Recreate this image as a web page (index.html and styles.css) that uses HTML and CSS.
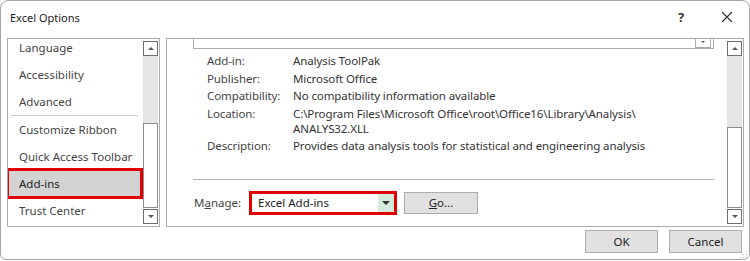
FILE: index.html
```html
<!DOCTYPE html>
<html lang="en">
<head>
  <meta charset="UTF-8">
  <title>Excel Options</title>
  <link rel="stylesheet" href="styles.css">
</head>
<body>

  <div class="window">
    <div class="titlebar">
      <span class="title">Excel Options</span>
      <span class="help">?</span>
      <span class="close">
        <svg width="12" height="12" viewBox="0 0 12 12"><path d="M1 1 L11 11 M11 1 L1 11" stroke="#333" stroke-width="1.1" fill="none"/></svg>
      </span>
    </div>

    <div class="main">
      <div class="panel nav">
        <ul class="nav-list">
          <li>Language</li>
          <li>Accessibility</li>
          <li>Advanced</li>
          <li class="nav-sep"></li>
          <li>Customize Ribbon</li>
          <li>Quick Access Toolbar</li>
          <li class="selected">Add-ins</li>
          <li>Trust Center</li>
        </ul>
        <div class="scrollbar">
          <div class="sb-btn"><span class="arrow up"></span></div>
          <div class="sb-track nav-track"></div>
          <div class="sb-thumb nav-thumb"></div>
          <div class="sb-btn"><span class="arrow down"></span></div>
        </div>
      </div>

      <div class="panel content">
        <div class="content-inner">
          <div class="addin-list">
            <div class="mini-btn"><span class="arrow down small"></span></div>
          </div>

          <div class="details">
            <span class="label">Add-in:</span>
            <span class="value">Analysis ToolPak</span>
            <span class="label">Publisher:</span>
            <span class="value">Microsoft Office</span>
            <span class="label">Compatibility:</span>
            <span class="value">No compatibility information available</span>
            <span class="label">Location:</span>
            <span class="value">C:\Program Files\Microsoft Office\root\Office16\Library\Analysis\<br>ANALYS32.XLL</span>
            <span class="label">Description:</span>
            <span class="value">Provides data analysis tools for statistical and engineering analysis</span>
          </div>

          <div class="divider"></div>

          <div class="manage">
            <span class="manage-label">M<u>a</u>nage:</span>
            <div class="combo">
              <span class="combo-text">Excel Add-ins</span>
              <span class="combo-btn"><span class="arrow down dark"></span></span>
            </div>
            <button class="btn go-btn"><u>G</u>o...</button>
          </div>
        </div>
        <div class="scrollbar">
          <div class="sb-btn"><span class="arrow up"></span></div>
          <div class="sb-track content-track"></div>
          <div class="sb-thumb content-thumb"></div>
          <div class="sb-btn"><span class="arrow down"></span></div>
        </div>
      </div>
    </div>

    <div class="footer">
      <button class="btn">OK</button>
      <button class="btn">Cancel</button>
      <svg class="grip" width="8" height="8" viewBox="0 0 8 8">
        <rect x="6" y="0" width="1" height="1" fill="#bbb"/>
        <rect x="3" y="3" width="1" height="1" fill="#bbb"/>
        <rect x="6" y="3" width="1" height="1" fill="#bbb"/>
        <rect x="0" y="6" width="1" height="1" fill="#bbb"/>
        <rect x="3" y="6" width="1" height="1" fill="#bbb"/>
        <rect x="6" y="6" width="1" height="1" fill="#bbb"/>
      </svg>
    </div>
  </div>

</body>
</html>
```

FILE: styles.css
```css
body {
  margin: 0;
  background: #fff;
  font-family: "Noto Sans", "Open Sans", sans-serif;
  font-size: 11.5px;
  color: #333;
}

.window {
  width: 750px;
  height: 260px;
  box-sizing: border-box;
  border: 1px solid #a6a6a6;
  border-radius: 8px 8px 6px 6px;
  background: #fff;
  display: flex;
  flex-direction: column;
  overflow: hidden;
}

.titlebar {
  height: 37px;
  display: flex;
  align-items: center;
  padding: 0 0 5px 9px;
  box-sizing: border-box;
}

.title {
  flex: 1;
  font-size: 11px;
  color: #1a1a1a;
}

.help {
  font-size: 13px;
  font-weight: bold;
  color: #333;
  width: 10px;
  text-align: center;
  margin-right: -1px;
}

.close {
  display: flex;
  margin-left: 36px;
  margin-right: 16px;
}

.main {
  display: flex;
  gap: 6px;
  padding: 0 5px 0 6px;
  height: 189px;
}

.panel {
  border: 1px solid #ababab;
  display: flex;
  overflow: hidden;
  position: relative;
}

.nav {
  width: 153px;
  box-sizing: border-box;
}

.nav-list {
  list-style: none;
  margin: -5px 2px 0 0;
  padding: 0;
  flex: 1;
}

.nav-list li {
  height: 27px;
  line-height: 27px;
  padding-left: 11px;
  color: #444;
  white-space: nowrap;
}

.nav-list .nav-sep {
  height: 1px;
  margin: 0 3px 0 3px;
  background: #d0d0d0;
}

.nav-list .selected {
  background: #d3d3d3;
  outline: 3px solid #e00000;
  outline-offset: -1px;
  color: #222;
}

.scrollbar {
  width: 15px;
  padding: 2px 1px 2px 0;
  display: flex;
  flex-direction: column;
}

.sb-btn {
  height: 15px;
  box-sizing: border-box;
  border: 1px solid #6e6e6e;
  background: #fff;
  display: flex;
  align-items: center;
  justify-content: center;
}

.sb-track {
  background: #e6e6e6;
}

.sb-thumb {
  box-sizing: border-box;
  border: 1px solid #8c8c8c;
  background: #fff;
  margin-bottom: 1px;
}

.nav-track { height: 67px; }
.nav-thumb { height: 86px; }

.content-track { height: 71px; }
.content-thumb { height: 82px; }

.arrow {
  width: 0;
  height: 0;
  border-left: 3px solid transparent;
  border-right: 3px solid transparent;
}

.arrow.up { border-bottom: 3px solid #555; }
.arrow.down { border-top: 3px solid #555; }
.arrow.small { border-left-width: 2px; border-right-width: 2px; border-top-width: 2px; }
.arrow.dark { border-left-width: 4px; border-right-width: 4px; border-top: 4px solid #333; }

.content {
  flex: 1;
}

.content-inner {
  flex: 1;
  padding-left: 26px;
  padding-right: 13px;
}

.addin-list {
  height: 10px;
  box-sizing: border-box;
  border: 1px solid #ababab;
  border-top: none;
  display: flex;
  justify-content: flex-end;
}

.mini-btn {
  width: 16px;
  height: 9px;
  box-sizing: border-box;
  border: 1px solid #ababab;
  border-top: none;
  margin-right: 2px;
  display: flex;
  justify-content: center;
  padding-top: 2px;
}

.details {
  display: grid;
  grid-template-columns: 86px 1fr;
  row-gap: 2.5px;
  line-height: 15px;
  letter-spacing: -0.1px;
  margin: 4px 0 0 14px;
}

.label {
  color: #444;
}

.divider {
  height: 1px;
  background: #b4b4b4;
  margin-top: 25.5px;
}

.manage {
  display: flex;
  align-items: center;
  margin-top: 11px;
}

.manage-label {
  color: #444;
  width: 55px;
  margin-left: 1px;
}

.combo {
  width: 148px;
  height: 24px;
  box-sizing: border-box;
  border: 3px solid #e00000;
  display: flex;
  align-items: center;
}

.combo-text {
  flex: 1;
  padding-left: 6px;
  color: #222;
}

.combo-btn {
  width: 16px;
  height: 18px;
  background: #d4ebdc;
  display: flex;
  align-items: center;
  justify-content: center;
}

.btn {
  font-family: inherit;
  font-size: 11.5px;
  color: #222;
  background: #e1e1e1;
  border: 1px solid #adadad;
  width: 73px;
  height: 23px;
  padding: 0;
}

.go-btn {
  width: 74px;
  height: 22px;
  margin-left: 7px;
}

.footer {
  display: flex;
  justify-content: flex-end;
  gap: 11px;
  padding: 3px 7px 0 0;
  position: relative;
}

.grip {
  position: absolute;
  right: 1px;
  bottom: -6px;
}
```
